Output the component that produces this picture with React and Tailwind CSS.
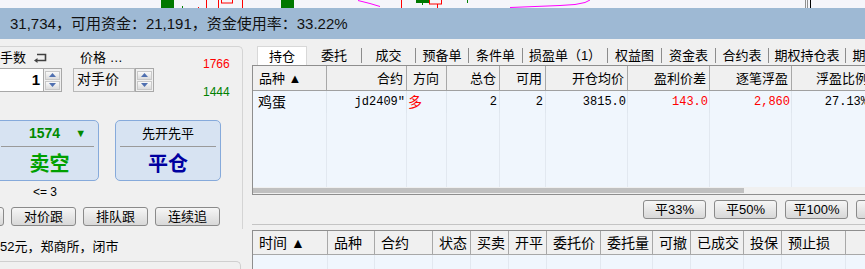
import React from "react";

const F = "font-['Liberation_Sans','Noto_Sans_CJK_SC',sans-serif]";
const M = "font-['Liberation_Mono','Noto_Sans_CJK_SC',monospace]";

function ChartStrip() {
  return (
    <svg width="865" height="8" className="block">
      <rect width="865" height="8" fill="#f5f5fa" />
      <rect x="161" y="0" width="13" height="8" fill="#007800" />
      <rect x="281" y="0" width="13" height="8" fill="#007800" />
      <line x1="182.5" y1="6" x2="182.5" y2="8" stroke="#008000" />
      <line x1="198.5" y1="7" x2="198.5" y2="8" stroke="#ff0000" />
      <line x1="206.5" y1="0" x2="206.5" y2="8" stroke="#ff0000" />
      <line x1="218.5" y1="0" x2="218.5" y2="8" stroke="#ff0000" />
      <rect x="221.5" y="-1" width="11" height="4" fill="none" stroke="#ff0000" />
      <line x1="242.5" y1="0" x2="242.5" y2="8" stroke="#ff0000" />
      <polyline points="358,0.5 370,3.5 380,6.5" stroke="#ff00ff" fill="none" />
      <line x1="401.5" y1="0" x2="401.5" y2="8" stroke="#ff0000" />
      <rect x="416" y="0" width="13" height="3" fill="#007800" />
      <line x1="422.5" y1="3" x2="422.5" y2="5" stroke="#008000" />
      <rect x="429.5" y="-1" width="12" height="5" fill="none" stroke="#ff0000" />
      <line x1="437.5" y1="4" x2="437.5" y2="8" stroke="#ff0000" />
      <line x1="467.5" y1="0" x2="467.5" y2="3" stroke="#008000" />
      <polyline points="510,7.5 535,6.5 560,5.5 575,4.5 585,2.5 590,0" stroke="#ff00ff" fill="none" />
      <line x1="805.5" y1="0" x2="805.5" y2="8" stroke="#909090" />
      <line x1="807.5" y1="0" x2="807.5" y2="8" stroke="#909090" />
      <line x1="810.5" y1="0" x2="810.5" y2="8" stroke="#000000" />
    </svg>
  );
}

function Tri({ down }) {
  return (
    <svg width="7" height="4" viewBox="0 0 7 4">
      <path d={down ? "M0 0H7L3.5 4Z" : "M0 4H7L3.5 0Z"} fill="#5070b0" />
    </svg>
  );
}

function Spin() {
  return (
    <div className="flex flex-col justify-center gap-[1px] w-[19px] h-full border border-[#a8a8a8] bg-[#f0f0f0] px-[1px]">
      <div className="h-[9px] flex items-center justify-center border border-[#c8c8c8] bg-gradient-to-b from-[#fafafa] to-[#dcdcdc]">
        <Tri />
      </div>
      <div className="h-[9px] flex items-center justify-center border border-[#c8c8c8] bg-gradient-to-b from-[#fafafa] to-[#dcdcdc]">
        <Tri down />
      </div>
    </div>
  );
}

function SmallBtn({ children, w = "w-[65px]" }) {
  return (
    <div className={`${w} h-[19px] shrink-0 flex items-center justify-center rounded-[3px] border border-[#8a8a8a] bg-gradient-to-b from-[#f6f6f6] to-[#d8d8d8] text-[13px] leading-none text-black`}>
      {children}
    </div>
  );
}

const tabs = [
  ["委托", 55],
  ["成交", 54],
  ["预备单", 53],
  ["条件单", 54],
  ["损盈单（1）", 85],
  ["权益图", 54],
  ["资金表", 54],
  ["合约表", 53],
  ["期权持仓表", 77],
  ["期权", 40],
];

const cols = [
  { t: "品种 ▲", w: 74, a: "left" },
  { t: "合约", w: 80 },
  { t: "方向", w: 40, a: "left" },
  { t: "总仓", w: 53 },
  { t: "可用", w: 46 },
  { t: "开仓均价", w: 82 },
  { t: "盈利价差", w: 82 },
  { t: "逐笔浮盈", w: 82 },
  { t: "浮盈比例", w: 80 },
];

const row = [
  { v: "鸡蛋", cls: `${F} text-[14px] text-black justify-start pl-[5px]` },
  { v: "jd2409\"", cls: `${M} text-[12px] text-black justify-end pr-[1px]` },
  { v: "多", cls: `${F} text-[14px] text-[#ff0000] justify-start pl-[1px]` },
  { v: "2", cls: `${M} text-[12px] text-black justify-end pr-[2px]` },
  { v: "2", cls: `${M} text-[12px] text-black justify-end pr-[2px]` },
  { v: "3815.0", cls: `${M} text-[12px] text-black justify-end pr-[1px]` },
  { v: "143.0", cls: `${M} text-[12px] text-[#ff0000] justify-end pr-[1px]` },
  { v: "2,860", cls: `${M} text-[12px] text-[#ff0000] justify-end pr-[1px]` },
  { v: "27.13%", cls: `${M} text-[12px] text-black justify-end pr-[3px]` },
];

const cols2 = [
  ["时间 ▲", 75],
  ["品种", 47],
  ["合约", 58],
  ["状态", 38],
  ["买卖", 38],
  ["开平", 38],
  ["委托价", 54],
  ["委托量", 52],
  ["可撤", 38],
  ["已成交", 53],
  ["投保", 38],
  ["预止损", 64],
];

export default function App() {
  return (
    <div className={`w-[865px] h-[269px] overflow-hidden bg-[#f0f0f0] ${F}`}>
      <ChartStrip />
      <div className="h-[31px] bg-[#9eb9d4] flex items-center pl-[10px] pt-[1px] text-[15px] text-[#111] whitespace-nowrap">
        31,734，可用资金：21,191，资金使用率：33.22%
      </div>

      <div className="flex h-[230px]">
        {/* left order panel */}
        <div className="w-[243px] shrink-0 flex flex-col">
          <div className="mt-[7px] h-[183px] border-t border-r border-[#d4d4d4] rounded-tr-[5px] flex flex-col">
            <div className="flex">
              <div className="w-[203px] shrink-0">
                <div className="mt-[3px] h-[14px] flex items-center text-[13px] leading-none text-black">
                  <span>手数</span>
                  <svg width="14" height="11" viewBox="0 0 14 11" className="ml-[7px]">
                    <path d="M4 2.5H12.5V8.5H3" fill="none" stroke="#404040" strokeWidth="1.6" />
                    <path d="M1 8.5L4.5 6V11Z" fill="#404040" />
                  </svg>
                  <span className="ml-[33px]">价格 …</span>
                </div>
                <div className="mt-[4px] h-[24px] flex">
                  <div className="w-[43px] h-full bg-white border-y border-[#a8a8a8] flex items-center justify-end pr-[3px] text-[15px] font-bold text-black">
                    1
                  </div>
                  <Spin />
                  <div className="ml-[11px] w-[62px] h-full border border-[#b8b8b8] bg-[#f0f0f0] flex items-start pt-[2px] pl-[3px] text-[14px] leading-[16px] text-black">
                    对手价
                  </div>
                  <Spin />
                </div>
              </div>
              <div className="pt-[11px] text-[12px] leading-[12px]">
                <div className="text-[#ff0000]">1766</div>
                <div className="mt-[16px] text-[#008000]">1444</div>
              </div>
            </div>

            <div className="mt-[22px] flex gap-[16px]">
              <div className="ml-[-10px] w-[109px] h-[61px] rounded-[5px] border border-[#86aadb] bg-[#d7e3f2] flex flex-col">
                <div className="h-[25px] flex items-center justify-center pl-[26px] text-[14px] font-bold text-[#008a00]">
                  <span>1574</span>
                  <span className="ml-[15px] text-[11px]">▼</span>
                </div>
                <div className="ml-[10px] mr-[4px] h-[1px] bg-[#9a9a9a]" />
                <div className="flex-1 flex items-center justify-center pl-[10px] text-[20px] font-bold text-[#00a000]">
                  卖空
                </div>
              </div>
              <div className="w-[106px] h-[61px] rounded-[5px] border border-[#86aadb] bg-[#d7e3f2] flex flex-col">
                <div className="h-[25px] flex items-center justify-center text-[13px] text-black">
                  先开先平
                </div>
                <div className="mx-[4px] h-[1px] bg-[#9a9a9a]" />
                <div className="flex-1 flex items-center justify-center text-[20px] font-bold text-[#0000a0]">
                  平仓
                </div>
              </div>
            </div>

            <div className="mt-[5px] h-[12px] w-[90px] flex items-center justify-center text-[12px] leading-none text-black">
              &lt;= 3
            </div>

            <div className="mt-[9px] flex gap-[7px] ml-[-61px]">
              <SmallBtn>市价</SmallBtn>
              <SmallBtn>对价跟</SmallBtn>
              <SmallBtn>排队跟</SmallBtn>
              <SmallBtn>连续追</SmallBtn>
            </div>
          </div>

          <div className="mt-[11px] h-[13px] flex items-center text-[13px] leading-none text-black whitespace-nowrap">
            52元，郑商所，闭市
          </div>
          <div className="mt-[8px] w-[241px] flex-1 border-t border-r border-[#cfcfcf] rounded-tr-[5px]" />
        </div>

        {/* right positions panel */}
        <div className="ml-[9px] flex-1 min-w-0 flex flex-col">
          <div className="mt-[5px] h-[21px] flex items-end text-[13px] leading-none text-black">
            <div className="w-[5px] shrink-0" />
            <div className="w-[50px] h-[19px] shrink-0 bg-white flex items-center justify-center border-t border-x border-[#d8d8d8]">
              持仓
            </div>
            {tabs.map(([t, w]) => (
              <div key={t} style={{ width: w }} className="h-[19px] shrink-0 flex items-center justify-center">
                <span className="flex-1 text-center whitespace-nowrap overflow-hidden">{t}</span>
                <span className="w-[1px] h-[15px] bg-[#8c8c8c]" />
              </div>
            ))}
          </div>

          {/* positions table */}
          <div className="h-[130px] border-t border-l border-b border-[#8e8e8e] flex flex-col overflow-hidden">
            <div className="h-[25px] flex bg-[#f0f0f0] border-b border-[#a0a0a0] shrink-0 text-[13px] leading-none text-black">
              {cols.map((c) => (
                <div
                  key={c.t}
                  style={{ width: c.w }}
                  className={`shrink-0 h-full flex items-center border-r border-[#a8a8a8] whitespace-nowrap ${c.a === "left" ? "justify-start pl-[6px]" : "justify-end pr-[3px]"}`}
                >
                  {c.t}
                </div>
              ))}
            </div>
            <div className="flex-1 bg-[#f0f6fd] flex flex-col">
              <div className="h-[22px] flex">
                {row.map((r, i) => (
                  <div
                    key={i}
                    style={{ width: cols[i].w }}
                    className={`shrink-0 h-full flex items-center border-r border-[#dfe6ee] whitespace-nowrap ${r.cls}`}
                  >
                    {r.v}
                  </div>
                ))}
              </div>
              <div className="flex-1 flex">
                {cols.map((c) => (
                  <div key={c.t} style={{ width: c.w }} className="shrink-0 h-full border-r border-[#e2e8f0]" />
                ))}
              </div>
            </div>
            <div className="h-[7px] shrink-0 bg-[#f0f0f0] flex items-center">
              <div className="w-[491px] h-[5px] bg-[#c0c0c0]" />
            </div>
          </div>

          <div className="h-[29px] shrink-0 flex items-center gap-[8px] pl-[391px]">
            <SmallBtn w="w-[63px]">平33%</SmallBtn>
            <SmallBtn w="w-[63px]">平50%</SmallBtn>
            <SmallBtn w="w-[63px]">平100%</SmallBtn>
            <SmallBtn w="w-[63px]">平</SmallBtn>
          </div>
          <div className="h-[1px] bg-[#c4c4c4] shrink-0" />
          <div className="h-[5px] shrink-0" />

          {/* orders table */}
          <div className="flex-1 border-t border-l border-[#8e8e8e] flex flex-col">
            <div className="h-[24px] flex shrink-0 text-[14px] leading-none text-black">
              {cols2.map(([t, w]) => (
                <div
                  key={t}
                  style={{ width: w }}
                  className="shrink-0 h-full flex items-center pl-[6px] bg-[#f0f0f0] border-r border-b border-[#a8a8a8] whitespace-nowrap"
                >
                  {t}
                </div>
              ))}
              <div className="flex-1 border-b border-[#a8a8a8]" />
            </div>
            <div className="flex-1 bg-[#f0f6fd] flex">
              {cols2.map(([t, w]) => (
                <div key={t} style={{ width: w }} className="shrink-0 h-full border-r border-[#e2e8f0]" />
              ))}
            </div>
          </div>
        </div>
      </div>
    </div>
  );
}
